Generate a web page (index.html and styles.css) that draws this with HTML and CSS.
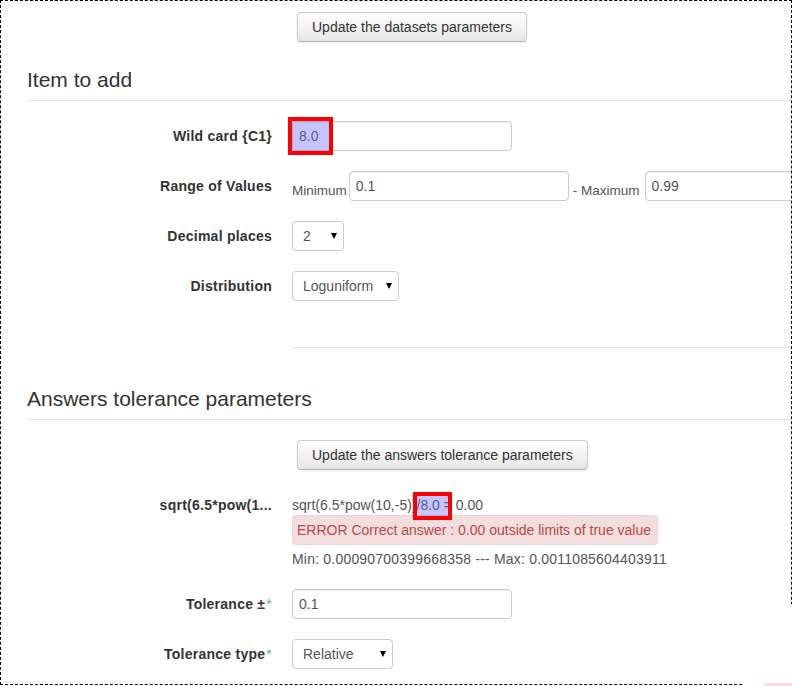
FILE: index.html
```html
<!DOCTYPE html>
<html lang="en">
<head>
    <meta charset="UTF-8">
    <meta name="viewport" content="width=device-width, initial-scale=1.0">
    <title>Dataset items</title>
    <link rel="stylesheet" href="styles.css">
</head>
<body>
    <div class="screen">
        <div class="frame">
            <div class="page">
                <div class="row row-top">
                    <div class="label"></div>
                    <div class="controls">
                        <button type="button" class="btn">Update the datasets parameters</button>
                    </div>
                </div>

                <div class="section-title">Item to add</div>

                <div class="row">
                    <label class="label" for="wildcard">Wild card {C1}</label>
                    <div class="controls">
                        <span class="field">
                            <input type="text" id="wildcard" class="input" value="8.0">
                            <span class="hl-box"></span>
                        </span>
                    </div>
                </div>

                <div class="row">
                    <div class="label">Range of Values</div>
                    <div class="controls range">
                        <span class="small-text">Minimum</span>
                        <input type="text" class="input" value="0.1">
                        <span class="small-text sep">- Maximum</span>
                        <input type="text" class="input" value="0.99">
                    </div>
                </div>

                <div class="row">
                    <label class="label" for="decimals">Decimal places</label>
                    <div class="controls">
                        <span class="select-wrap">
                            <select id="decimals" class="select sel-digits">
                                <option>2</option>
                            </select>
                        </span>
                    </div>
                </div>

                <div class="row">
                    <label class="label" for="distribution">Distribution</label>
                    <div class="controls">
                        <span class="select-wrap">
                            <select id="distribution" class="select sel-dist">
                                <option>Loguniform</option>
                            </select>
                        </span>
                    </div>
                </div>

                <div class="divider"></div>

                <div class="section-title second">Answers tolerance parameters</div>

                <div class="row">
                    <div class="label"></div>
                    <div class="controls">
                        <button type="button" class="btn">Update the answers tolerance parameters</button>
                    </div>
                </div>

                <div class="row">
                    <div class="label">sqrt(6.5*pow(1...</div>
                    <div class="controls static">
                        <div class="formula">sqrt(6.5*pow(10,-5))<span class="hl-inline">/8.0</span> = 0.00</div>
                        <div class="alert">ERROR Correct answer : 0.00 outside limits of true value</div>
                        <div class="limits">Min: 0.00090700399668358 --- Max: 0.0011085604403911</div>
                    </div>
                </div>

                <div class="row">
                    <label class="label" for="tolerance">Tolerance ±<span class="req">*</span></label>
                    <div class="controls">
                        <input type="text" id="tolerance" class="input" value="0.1">
                    </div>
                </div>

                <div class="row">
                    <label class="label" for="toltype">Tolerance type<span class="req">*</span></label>
                    <div class="controls">
                        <span class="select-wrap">
                            <select id="toltype" class="select sel-type">
                                <option>Relative</option>
                            </select>
                        </span>
                    </div>
                </div>
            </div>
        </div>
        <div class="corner"><span class="corner-tab"></span></div>
    </div>
</body>
</html>
```

FILE: styles.css
```css
body {
    font-family: "Liberation Sans", Arial, sans-serif;
    font-size: 14px;
    line-height: 20px;
    margin: 0;
    padding: 0;
    background: #fff;
    color: #333;
}
.screen {
    position: relative;
    width: 792px;
    height: 686px;
    overflow: hidden;
}
.frame {
    width: 792px;
    height: 685px;
    border: 1px dashed #000;
    box-sizing: border-box;
    overflow: hidden;
}
.page {
    width: 1000px;
    padding: 11px 0 0 26px;
}
.row {
    display: grid;
    grid-template-columns: 245px 1fr;
    column-gap: 20px;
    margin-bottom: 20px;
}
.row-top {
    margin-bottom: 18px;
}
.label {
    display: block;
    text-align: right;
    font-weight: bold;
    letter-spacing: 0.25px;
    padding-top: 5px;
    line-height: 20px;
    white-space: nowrap;
}
.req {
    color: #5cb85c;
    font-weight: normal;
    margin-left: 1px;
}
.controls {
    display: flex;
    align-items: flex-start;
    color: #555;
}

/* buttons */
.btn {
    font-family: inherit;
    font-size: 14px;
    line-height: 20px;
    color: #333;
    padding: 4px 14px;
    margin-left: 5px;
    border: 1px solid #ccc;
    border-bottom-color: #b3b3b3;
    border-radius: 4px;
    background: linear-gradient(to bottom, #fff, #e6e6e6);
    box-shadow: inset 0 1px 0 rgba(255, 255, 255, 0.2), 0 1px 2px rgba(0, 0, 0, 0.08);
    cursor: pointer;
}

/* section headings */
.section-title {
    font-size: 21px;
    line-height: 40px;
    color: #333;
    border-bottom: 1px solid #e5e5e5;
    margin-bottom: 20px;
}
.section-title.second {
    margin-top: 31px;
}
.divider {
    margin: 46px 0 0 265px;
    border-top: 1px solid #e5e5e5;
}

/* inputs */
.input {
    width: 220px;
    height: 30px;
    box-sizing: border-box;
    padding: 4px 6px;
    font-family: inherit;
    font-size: 14px;
    color: #555;
    border: 1px solid #ccc;
    border-radius: 4px;
    box-shadow: inset 0 1px 1px rgba(0, 0, 0, 0.075);
    background: #fff;
}
.field {
    position: relative;
    display: inline-block;
}
.hl-box {
    position: absolute;
    left: -4px;
    top: -4px;
    width: 45px;
    height: 38px;
    box-sizing: border-box;
    border: 4px solid #f00;
    background: rgba(100, 100, 255, 0.37);
}
.range {
    align-items: flex-end;
}
.small-text {
    font-size: 13.5px;
    color: #555;
    margin-right: 2px;
}
.small-text.sep {
    margin: 0 5px 0 4px;
}

/* selects */
.select-wrap {
    position: relative;
    display: inline-block;
}
.select-wrap::after {
    content: "";
    position: absolute;
    top: 12px;
    right: 7px;
    border-left: 3px solid transparent;
    border-right: 3px solid transparent;
    border-top: 6px solid #000;
    pointer-events: none;
}
.select {
    appearance: none;
    -webkit-appearance: none;
    height: 30px;
    padding: 4px 6px 4px 10px;
    font-family: inherit;
    font-size: 14px;
    color: #555;
    border: 1px solid #ccc;
    border-radius: 4px;
    background: #fff;
}
.sel-digits {
    width: 52px;
}
.sel-dist {
    width: 107px;
}
.sel-type {
    width: 101px;
}

/* computed answer block */
.static {
    flex-direction: column;
}
.formula {
    padding-top: 5px;
    line-height: 20px;
}
.hl-inline {
    position: relative;
}
.hl-inline::after {
    content: "";
    position: absolute;
    left: -4px;
    top: -5px;
    width: 39px;
    height: 28px;
    box-sizing: border-box;
    border: 4px solid #f00;
    background: rgba(100, 100, 255, 0.37);
}
.alert {
    display: inline-block;
    padding: 4px 6px 4px 4px;
    margin-bottom: 4px;
    color: #b94a48;
    background: #f2dede;
    border: 1px solid #eed3d7;
    border-radius: 4px;
}
.limits {
    line-height: 20px;
    letter-spacing: 0.2px;
}

/* cut-off corner of the capture */
.corner {
    position: absolute;
    right: 0;
    bottom: 0;
    width: 49px;
    height: 82px;
    background: #fff;
}
.corner-tab {
    position: absolute;
    right: 0;
    bottom: 0;
    width: 28px;
    height: 3px;
    background: #fcdde4;
}
```
